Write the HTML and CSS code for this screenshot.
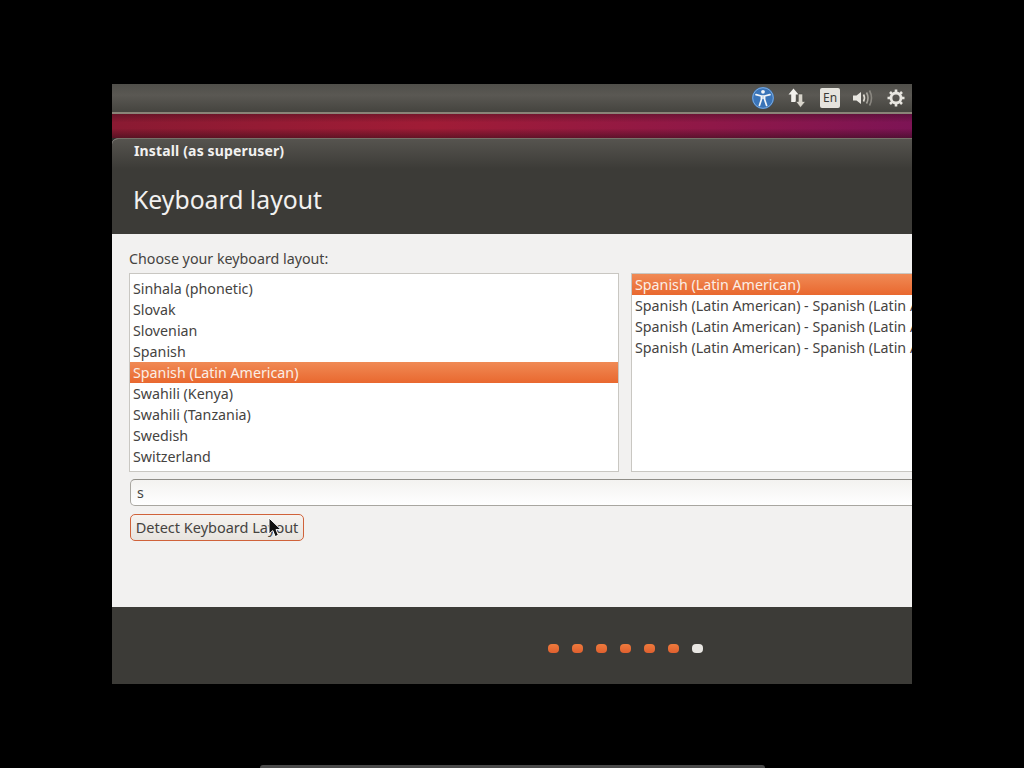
FILE: index.html
```html
<!DOCTYPE html>
<html lang="en">

<head>
    <meta charset="UTF-8">
    <title>Install (as superuser)</title>
    <link rel="stylesheet" href="styles.css">
</head>

<body>
    <div class="screen">
        <div class="panel">
            <svg class="icon icon-access" width="24" height="24" viewBox="0 0 24 24">
                <circle cx="12" cy="12" r="11" fill="#3a74b8" />
                <circle cx="12" cy="12" r="10.3" fill="none" stroke="#7aa9dc" stroke-width="1" />
                <circle cx="12" cy="5.8" r="1.9" fill="#f4f6f8" />
                <path d="M5 8.6 L10.4 10 V13.6 L8.4 19.5 M19 8.6 L13.6 10 V13.6 L15.6 19.5 M10.4 10 H13.6 M10.4 12 H13.6" fill="none" stroke="#f4f6f8" stroke-width="1.7" stroke-linecap="round" stroke-linejoin="round" />
            </svg>
            <svg class="icon icon-net" width="18" height="20" viewBox="0 0 18 20">
                <path d="M5.5 0.5 L10.5 6.5 H7.8 V14 H3.2 V6.5 H0.5 Z" fill="#f2f1ed" />
                <path d="M12.5 19.5 L7.8 13.5 H10.3 V6 H14.7 V13.5 H17.5 Z" fill="#d8d4cb" stroke="#45443f" stroke-width="0.6" />
            </svg>
            <div class="lang">En</div>
            <svg class="icon icon-sound" width="22" height="18" viewBox="0 0 22 18">
                <path d="M1 6.5 H4.5 L9 3 V15 L4.5 11.5 H1 Z" fill="#e8e6e0" />
                <path d="M11.5 5.5 Q13.5 9 11.5 12.5" fill="none" stroke="#dfdbd2" stroke-width="1.6" />
                <path d="M14.5 3.5 Q17.5 9 14.5 14.5" fill="none" stroke="#a8a59d" stroke-width="1.6" />
                <path d="M17.5 1.5 Q21.5 9 17.5 16.5" fill="none" stroke="#8a8780" stroke-width="1.6" />
            </svg>
            <svg class="icon icon-gear" width="18" height="18" viewBox="0 0 18 18">
                <circle cx="9" cy="9" r="5" fill="none" stroke="#e8e6e0" stroke-width="2.8" />
                <path d="M9 0.5 V4 M9 14 V17.5 M0.5 9 H4 M14 9 H17.5 M3 3 L5.4 5.4 M12.6 12.6 L15 15 M15 3 L12.6 5.4 M5.4 12.6 L3 15" stroke="#e8e6e0" stroke-width="2.6" />
            </svg>
        </div>
        <div class="redband"></div>
        <div class="window">
            <div class="header">
                <p class="wintitle">Install (as superuser)</p>
                <h1 class="pagetitle">Keyboard layout</h1>
            </div>
            <div class="content">
                <p class="chooselabel">Choose your keyboard layout:</p>
                <div class="lists">
                    <ul class="list list-left">
                        <li>Sinhala (phonetic)</li>
                        <li>Slovak</li>
                        <li>Slovenian</li>
                        <li>Spanish</li>
                        <li class="selected">Spanish (Latin American)</li>
                        <li>Swahili (Kenya)</li>
                        <li>Swahili (Tanzania)</li>
                        <li>Swedish</li>
                        <li>Switzerland</li>
                    </ul>
                    <ul class="list list-right">
                        <li class="selected">Spanish (Latin American)</li>
                        <li>Spanish (Latin American) - Spanish (Latin American)</li>
                        <li>Spanish (Latin American) - Spanish (Latin American)</li>
                        <li>Spanish (Latin American) - Spanish (Latin American)</li>
                    </ul>
                </div>
                <div class="searchbox">s</div>
                <div class="detectbtn">
                    Detect Keyboard Layout
                    <svg class="cursor" width="14" height="21" viewBox="0 0 14 21">
                        <path d="M1 1 V17 L4.8 13.6 L7.2 19.6 L10.4 18.2 L8 12.6 H13 Z" fill="#111" stroke="#fff" stroke-width="1" />
                    </svg>
                </div>
            </div>
            <div class="footer">
                <span class="dot"></span>
                <span class="dot"></span>
                <span class="dot"></span>
                <span class="dot"></span>
                <span class="dot"></span>
                <span class="dot"></span>
                <span class="dot dot-current"></span>
            </div>
        </div>
    </div>
    <div class="nextedge"></div>
</body>

</html>
```

FILE: styles.css
```css
html,
body {
    height: 768px;
    margin: 0;
    overflow: hidden;
    background-color: #000;
}

body {
    padding-top: 84px;
    box-sizing: border-box;
    font-family: 'Noto Sans', 'Open Sans', sans-serif;
}

.screen {
    width: 800px;
    height: 600px;
    margin-left: 112px;
    overflow: hidden;
    display: flex;
    flex-direction: column;
    background-color: #2c2a29;
}

/* top panel */
.panel {
    height: 28px;
    flex: none;
    display: flex;
    align-items: center;
    justify-content: flex-end;
    padding-right: 7px;
    background: linear-gradient(#504f4a, #5a5853 40%, #45443f);
    border-bottom: 2px solid #8a8478;
}

.icon {
    flex: none;
}

.icon-access {
    margin-right: 13px;
}

.icon-net {
    margin-right: 14px;
}

.icon-sound {
    margin: 0 13px 0 12px;
}

.lang {
    width: 20px;
    height: 20px;
    background-color: #e6e4de;
    border-radius: 2px;
    color: #3c3b37;
    font-size: 12px;
    line-height: 20px;
    text-align: center;
}

.redband {
    height: 24px;
    flex: none;
    background:
        linear-gradient(rgba(40, 10, 20, 0.35), rgba(40, 10, 20, 0) 35%, rgba(40, 10, 20, 0) 60%, rgba(40, 10, 20, 0.5)),
        linear-gradient(90deg, #8a1a32, #a01c36 40%, #8f1848 75%, #7d1455);
}

/* installer window */
.window {
    flex: 1;
    width: 1026px;
    display: flex;
    flex-direction: column;
    background-color: #f2f1f0;
    border-top: 1px solid #77736a;
    border-top-left-radius: 6px;
    overflow: hidden;
}

.header {
    height: 95px;
    flex: none;
    background: linear-gradient(#56544f, #3c3b37 30px);
    color: #f2f1f0;
}

.wintitle {
    margin: 0;
    padding: 3px 0 0 22px;
    font-size: 14px;
    line-height: 18px;
    font-weight: bold;
    letter-spacing: 0.15px;
}

.pagetitle {
    margin: 0;
    padding: 23px 0 0 21px;
    font-size: 24.75px;
    line-height: 34px;
    font-weight: normal;
}

.content {
    flex: 1;
    padding: 15px 0 0 17px;
    color: #45433f;
    font-size: 14.25px;
}

.chooselabel {
    margin: 0 0 5px 0;
    line-height: 19px;
}

.lists {
    display: flex;
    gap: 12px;
}

.list {
    height: 197px;
    margin: 0;
    padding: 0;
    list-style: none;
    background-color: #fff;
    border: 1px solid #c9c7c2;
    overflow: hidden;
}

.list li {
    height: 21px;
    padding-left: 3px;
    line-height: 21px;
    white-space: nowrap;
}

.list .selected {
    background: linear-gradient(#f08a55, #e9682f);
    color: #fbeee6;
}

.list-left {
    width: 488px;
    padding-top: 4px;
    height: 193px;
}

.list-right {
    width: 500px;
}

.searchbox {
    width: 900px;
    height: 25px;
    margin: 7px 0 0 1px;
    padding-left: 6px;
    background: linear-gradient(#f3f2f0, #fff);
    border: 1px solid #a8a6a0;
    border-top-color: #8f8d87;
    border-radius: 5px;
    line-height: 25px;
}

.detectbtn {
    position: relative;
    width: 172px;
    height: 25px;
    margin: 8px 0 0 1px;
    background: linear-gradient(#f5f3f0, #e8e4df);
    border: 1px solid #d0623a;
    border-radius: 5px;
    font-size: 14.5px;
    line-height: 25px;
    text-align: center;
    white-space: nowrap;
}

.cursor {
    position: absolute;
    left: 137px;
    top: 2px;
}

.footer {
    height: 77px;
    flex: none;
    display: flex;
    align-items: center;
    gap: 13px;
    padding: 5px 0 0 436px;
    box-sizing: border-box;
    background-color: #3c3b37;
}

.dot {
    width: 11px;
    height: 9px;
    border-radius: 4px;
    background: linear-gradient(#ee7a3c, #e0602f);
}

.dot-current {
    background: #e8e6e2;
}

/* next monitor edge at the bottom */
.nextedge {
    width: 505px;
    height: 3px;
    margin: 81px 0 0 260px;
    background-color: #4a4a4a;
    border-radius: 4px 4px 0 0;
}
```
